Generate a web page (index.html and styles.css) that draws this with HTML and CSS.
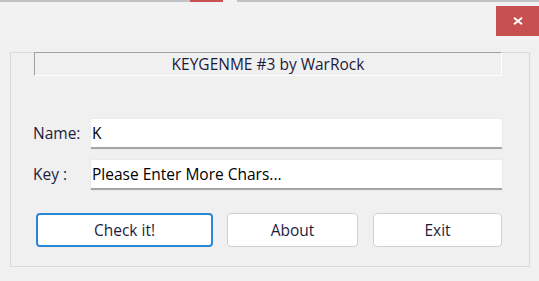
FILE: index.html
```html
<!DOCTYPE html>
<html lang="en">
<head>
    <meta charset="UTF-8">
    <title>KEYGENME #3 by WarRock</title>
    <link rel="stylesheet" href="styles.css">
</head>
<body>

    <!-- Edge of the window behind -->
    <div class="topline">
        <div class="seg-gray seg-left"></div>
        <div class="seg-red"></div>
        <div class="seg-white"></div>
        <div class="seg-gray seg-right"></div>
    </div>

    <div class="titlebar">
        <div class="close-btn">
            <svg width="10" height="8" viewBox="0 0 10 8">
                <path d="M1 0.8 L9 7.2 M9 0.8 L1 7.2" stroke="#fff" stroke-width="2"/>
            </svg>
        </div>
    </div>

    <div class="client">
        <div class="frame">
            <div class="caption">KEYGENME #3 by WarRock</div>

            <div class="row row-name">
                <span class="label">Name:</span>
                <div class="field">K</div>
            </div>
            <div class="row row-key">
                <span class="label">Key :</span>
                <div class="field">Please Enter More Chars...</div>
            </div>

            <div class="buttons">
                <button class="btn btn-default btn-check">Check it!</button>
                <button class="btn btn-about">About</button>
                <button class="btn btn-exit">Exit</button>
            </div>
        </div>
    </div>

</body>
</html>
```

FILE: styles.css
```css
body {
    margin: 0;
    width: 539px;
    height: 281px;
    background-color: #f0f0f0;
    font-family: 'Open Sans', 'DejaVu Sans', sans-serif;
    font-size: 15.5px;
    color: #1c1c3c;
    overflow: hidden;
}

/* thin strip of the window behind */
.topline {
    display: flex;
    height: 2px;
}

.seg-gray {
    background-color: #c2c2c2;
}

.seg-left {
    width: 190px;
}

.seg-red {
    width: 33px;
    background-color: #c75050;
}

.seg-white {
    width: 14px;
    background-color: #f2f2f2;
}

.seg-right {
    flex: 1;
}

/* Title bar */
.titlebar {
    height: 38px;
    background-color: #f2f2f2;
    display: flex;
    justify-content: flex-end;
    align-items: flex-start;
}

.close-btn {
    margin-top: 4px;
    width: 43px;
    height: 30px;
    background-color: #c75050;
    display: flex;
    align-items: center;
    justify-content: center;
}

/* Dialog area */
.client {
    padding: 12px 9px 14px 10px;
}

.frame {
    height: 213px;
    border: 1px solid #d8d8d8;
    border-top-color: #dcdcdc;
    padding: 0 27px 0 23px;
}

.caption {
    margin-top: -1px;
    height: 22px;
    border-top: 1px solid #a0a0a0;
    border-left: 1px solid #a0a0a0;
    border-right: 1px solid #ffffff;
    border-bottom: 1px solid #ffffff;
    display: flex;
    align-items: center;
    justify-content: center;
}

.row {
    display: flex;
    align-items: center;
}

.row-name {
    margin-top: 43px;
}

.row-key {
    margin-top: 11px;
}

.label {
    width: 57px;
    margin-left: -1px;
    margin-top: -2px;
}

.field {
    flex: 1;
    height: 28px;
    background-color: #ffffff;
    border-bottom: 2px solid #a5a5a5;
    box-shadow: 0 0 1px #d6d6d6;
    display: flex;
    align-items: center;
    padding-left: 1px;
    margin-left: 1px;
    color: #000;
}

/* Buttons */
.buttons {
    display: flex;
    margin-top: 23px;
    padding-left: 2px;
}

.btn {
    height: 34px;
    background-color: #ffffff;
    border: 1px solid #d0d0d0;
    border-radius: 4px;
    font-family: inherit;
    font-size: 15.5px;
    color: #1c1c3c;
    padding: 0;
}

.btn-default {
    border: 2px solid #2a86d6;
}

.btn-check {
    width: 177px;
}

.btn-about {
    width: 131px;
    margin-left: 14px;
}

.btn-exit {
    width: 129px;
    margin-left: 15px;
}
```
